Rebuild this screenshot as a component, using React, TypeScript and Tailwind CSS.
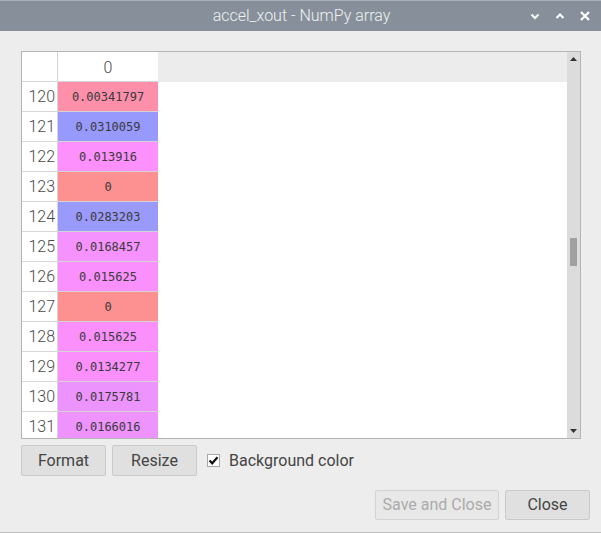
import React from "react";

const rows: { n: number; v: string; c: string }[] = [
  { n: 120, v: "0.00341797", c: "#fd8fab" },
  { n: 121, v: "0.0310059", c: "#9799fd" },
  { n: 122, v: "0.013916", c: "#fd90fd" },
  { n: 123, v: "0", c: "#fd9090" },
  { n: 124, v: "0.0283203", c: "#9a9afb" },
  { n: 125, v: "0.0168457", c: "#f692fd" },
  { n: 126, v: "0.015625", c: "#fa90fd" },
  { n: 127, v: "0", c: "#fd9090" },
  { n: 128, v: "0.015625", c: "#fb90fd" },
  { n: 129, v: "0.0134277", c: "#fb90fd" },
  { n: 130, v: "0.0175781", c: "#ec93fd" },
  { n: 131, v: "0.0166016", c: "#ee93fd" },
];

export default function App() {
  return (
    <div
      className="w-[601px] h-[533px] bg-[#ededed] flex flex-col overflow-hidden border-b border-[#bdbdbd]"
      style={{ fontFamily: "Roboto, 'Liberation Sans', sans-serif" }}
    >
      {/* Title bar */}
      <div className="h-[31px] bg-[#87909a] border-t border-[#a7aeb5] flex items-center relative shrink-0">
        <div className="flex-1 text-center text-[16px] text-[#eef0f2] pl-[2px] font-light">accel_xout - NumPy array</div>
        <div className="absolute right-[10px] top-0 h-full flex items-center gap-[13px]">
          <svg width="12" height="12" viewBox="0 0 12 12">
            <path d="M2.5 4.5 L6 8 L9.5 4.5" stroke="#ffffff" strokeWidth="2" fill="none" />
          </svg>
          <svg width="12" height="12" viewBox="0 0 12 12">
            <path d="M2.5 8 L6 4.5 L9.5 8" stroke="#ffffff" strokeWidth="2" fill="none" />
          </svg>
          <svg width="12" height="12" viewBox="0 0 12 12">
            <path d="M2 2 L10 10 M10 2 L2 10" stroke="#ffffff" strokeWidth="2.2" fill="none" />
          </svg>
        </div>
      </div>

      {/* Body */}
      <div className="flex-1 flex flex-col pl-[21px] pr-[20px] pt-[20px]">
        {/* Table */}
        <div className="w-[560px] h-[388px] border border-[#b4b4b4] flex bg-white">
          <div className="flex-1 flex flex-col overflow-hidden">
            {/* header */}
            <div className="flex h-[30px] shrink-0">
              <div className="w-[36px] h-[30px] bg-white border-r border-b border-[#d6d6d6]" />
              <div className="w-[100px] h-[30px] bg-white border-b border-[#d6d6d6] flex items-center justify-center pt-[2px] text-[16px] text-[#4a4a4a] font-light">
                0
              </div>
              <div className="flex-1 h-[30px] bg-[#ececec]" />
            </div>
            {rows.map((r) => (
              <div key={r.n} className="flex h-[30px] shrink-0">
                <div className="w-[36px] h-[30px] bg-white border-r border-b border-[#d6d6d6] flex items-center justify-end pr-[2px] pt-[1px] text-[16px] text-[#4a4a4a] font-light">
                  {r.n}
                </div>
                <div
                  className="w-[100px] h-[30px] border-b border-[#d3d3d3] flex items-center justify-center text-[12px] text-[#3a3a3a]"
                  style={{ backgroundColor: r.c, fontFamily: "'DejaVu Sans Mono', 'Liberation Mono', monospace" }}
                >
                  {r.v}
                </div>
                <div className="flex-1" />
              </div>
            ))}
          </div>
          {/* Scrollbar */}
          <div className="w-[13px] bg-[#dcdcdc] flex flex-col items-center relative">
            <svg className="mt-[5px]" width="7" height="5" viewBox="0 0 7 5">
              <path d="M3.5 0 L7 4 L0 4 Z" fill="#333" />
            </svg>
            <div className="absolute left-[3px] top-[186px] w-[7px] h-[28px] bg-[#a1a1a1]" />
            <div className="flex-1" />
            <svg className="mb-[4px]" width="7" height="5" viewBox="0 0 7 5">
              <path d="M0 0 L7 0 L3.5 4 Z" fill="#333" />
            </svg>
          </div>
        </div>

        {/* Controls row */}
        <div className="flex items-center mt-[6px] h-[31px]">
          <button className="w-[85px] h-[31px] bg-[#e0e0e0] border border-[#cacaca] rounded-[2px] text-[16px] text-[#444]">
            Format
          </button>
          <button className="w-[85px] h-[31px] ml-[6px] bg-[#e0e0e0] border border-[#cacaca] rounded-[2px] text-[16px] text-[#444]">
            Resize
          </button>
          <div className="ml-[10px] w-[13px] h-[13px] bg-white border border-[#a8a8a8] flex items-center justify-center">
            <svg width="11" height="11" viewBox="0 0 11 11">
              <path d="M1.5 5.5 L4.2 8.3 L9.5 2.2" stroke="#111" strokeWidth="2.2" fill="none" />
            </svg>
          </div>
          <span className="ml-[9px] text-[16px] text-[#444]">Background color</span>
        </div>

        {/* Bottom buttons */}
        <div className="flex justify-end mt-[14px]">
          <button className="w-[124px] h-[30px] bg-[#e8e8e8] border border-[#d3d3d3] rounded-[2px] text-[16px] text-[#ababab]">
            Save and Close
          </button>
          <button className="w-[85px] h-[30px] ml-[6px] mr-[-9px] bg-[#e0e0e0] border border-[#cacaca] rounded-[2px] text-[16px] text-[#444]">
            Close
          </button>
        </div>
      </div>
    </div>
  );
}
